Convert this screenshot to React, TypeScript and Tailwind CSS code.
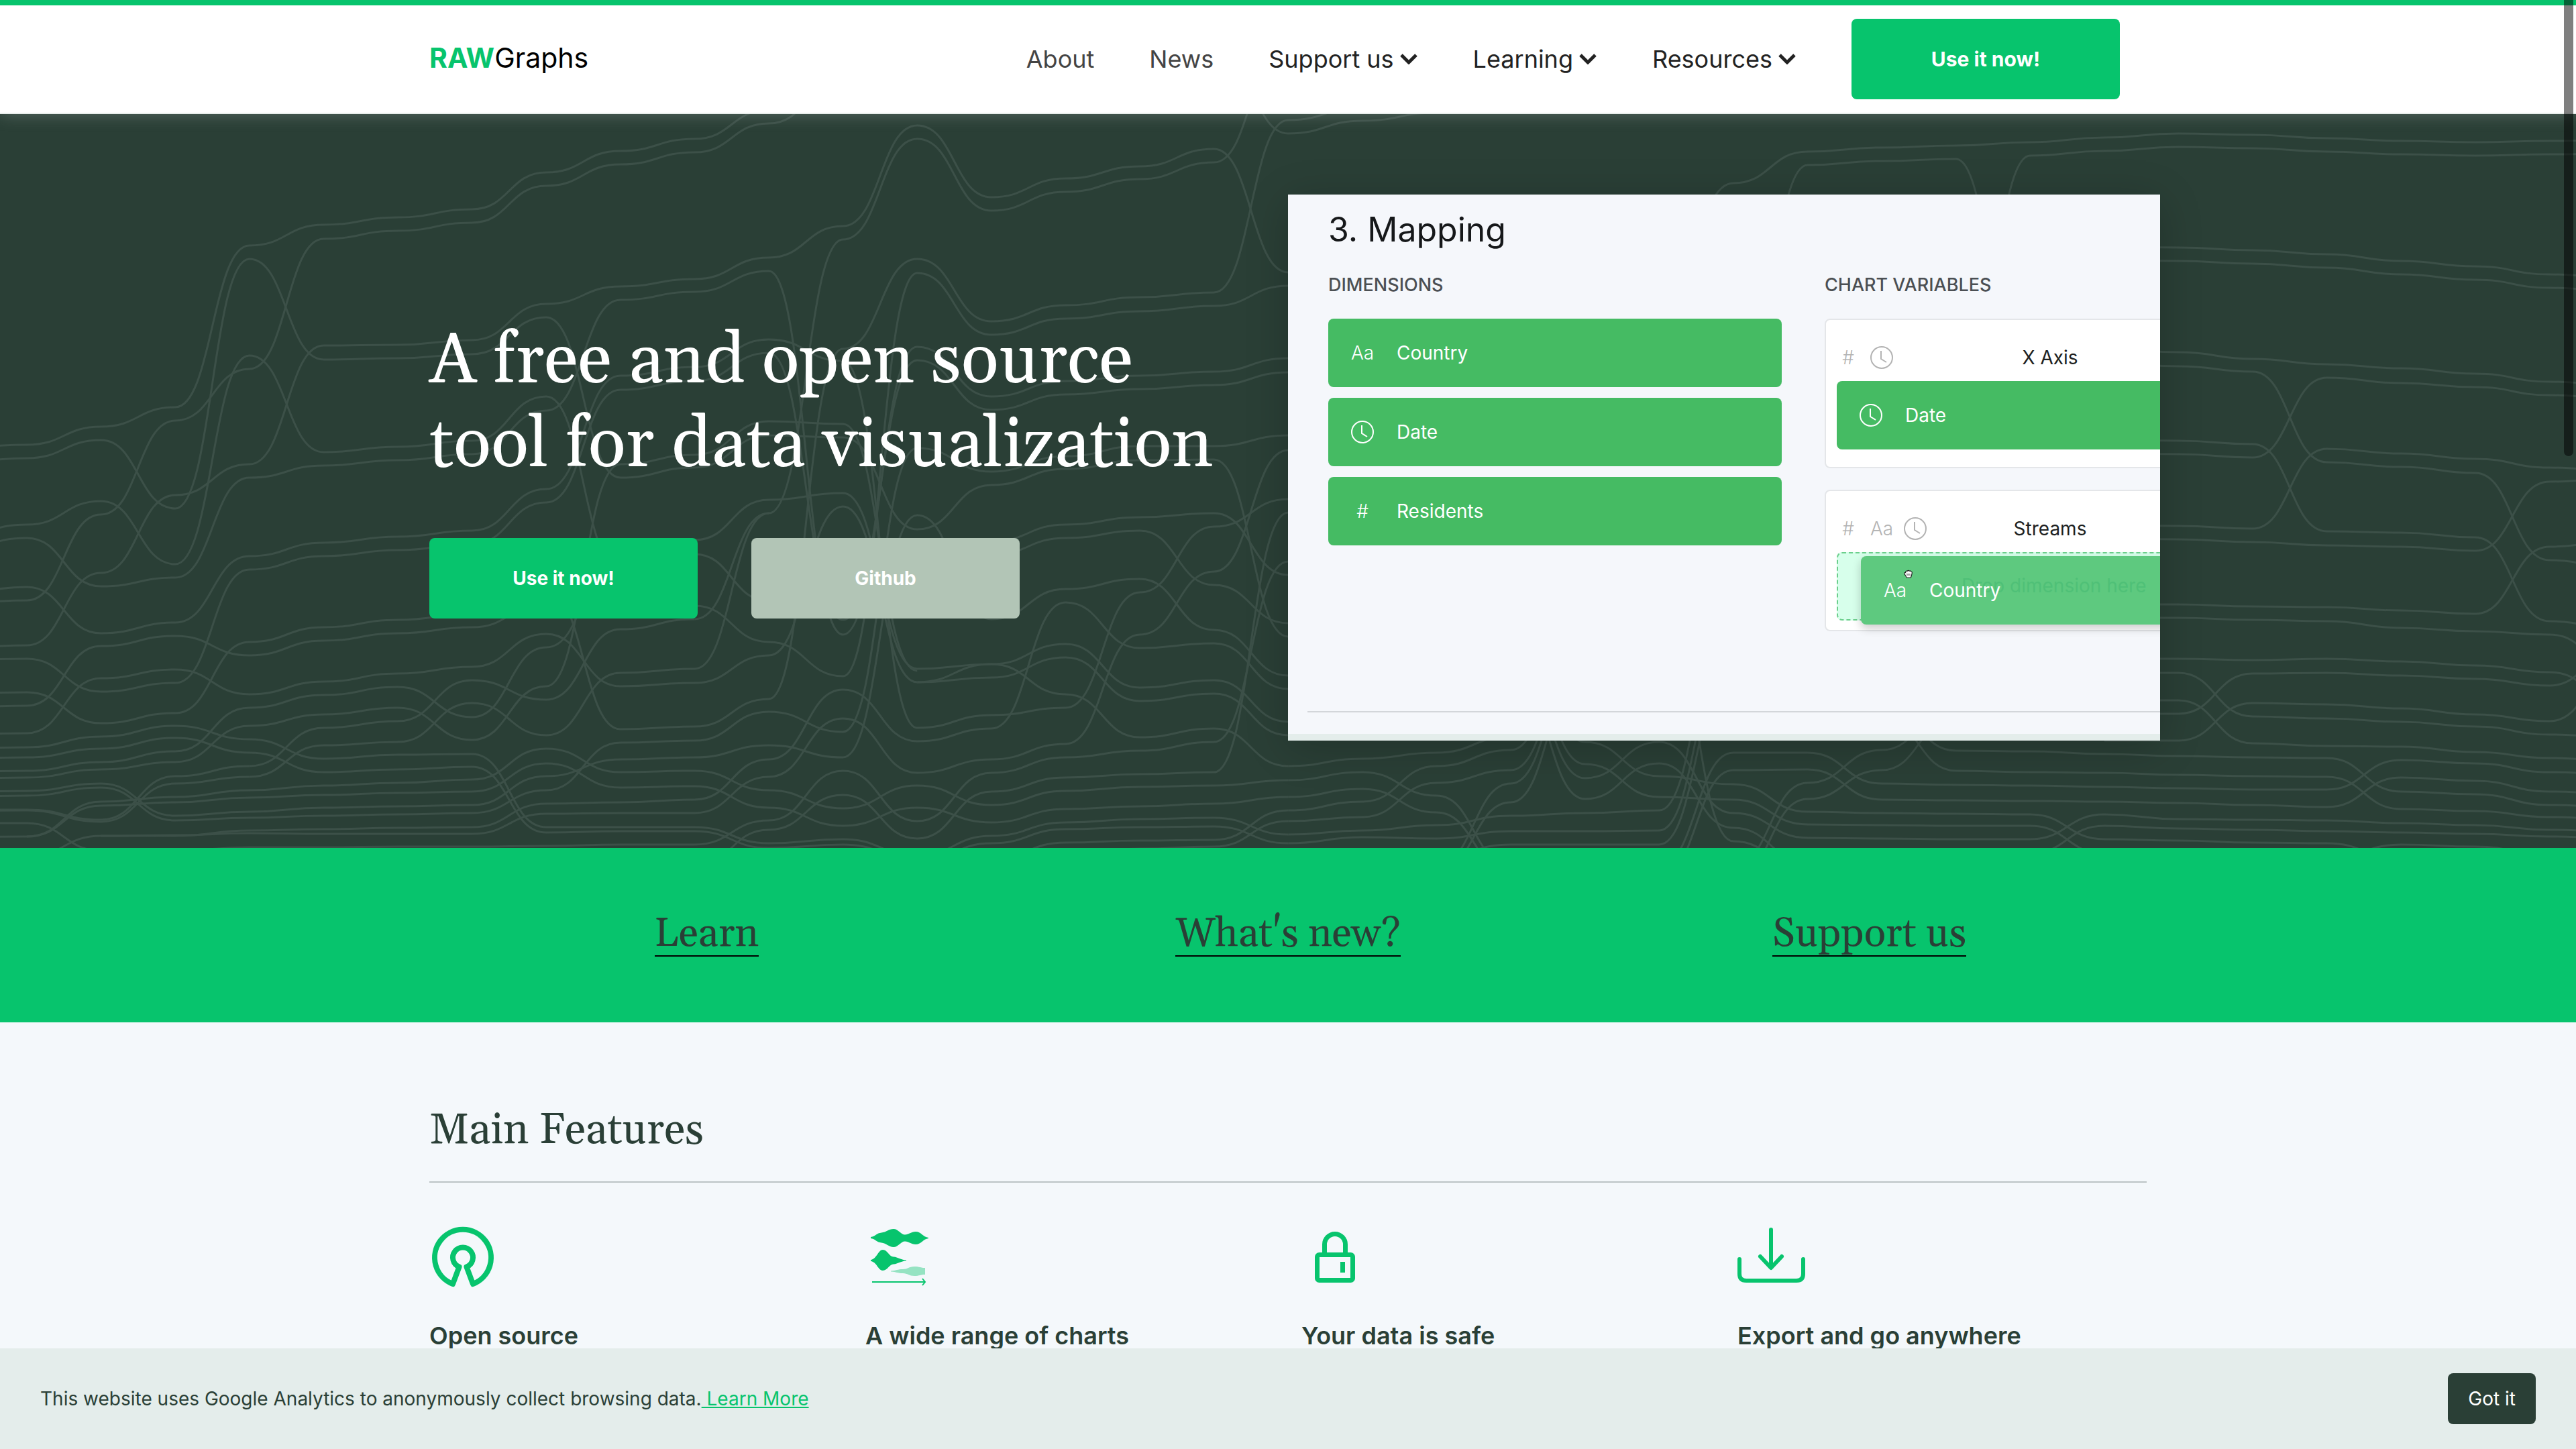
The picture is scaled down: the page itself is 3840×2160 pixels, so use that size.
import React from "react";

const SANS = "font-['Inter','Liberation_Sans',sans-serif]";
const SERIF = "font-['Georgia','Gelasio','Liberation_Serif',serif]";

/* ---------- Bump chart drawn behind the hero ---------- */

const STEP = 110.6;
const ORIGIN = 40;

/* Each stream: index of its first column, then its height at every column. */
const STREAMS: [number, number[]][] = [
  [-1, [668, 663, 636, 607, 366, 335, 324, 312, 257, 225, 207, 164, 130]],
  [-1, [690, 683, 656, 758, 386, 536, 534, 528, 473, 712, 697, 649, 652, 789, 723, 699, 686, 685, 949]],
  [-1, [900, 895, 767, 627, 550, 356, 344, 332, 277, 245, 227, 184, 120]],
  [-1, [800, 782, 747, 841, 530, 674, 666, 657, 591, 848, 826, 896]],
  [-1, [966, 962, 854, 738, 692, 515, 514, 507, 453, 427, 416, 384, 337, 187, 294, 266, 248, 222, 406]],
  [-1, [820, 802, 874, 861, 712, 694, 686, 677, 612, 447, 435, 404, 946, 517, 591, 568, 560, 554, 534]],
  [9, [923, 765, 357, 207, 314, 286, 267, 242, 60]],
  [16, [60, 199, 180, 168, 150]],
  [10, [1042, 520, 386, 479, 455, 443, 436, 179, 160]],
  [-1, [885, 875, 944, 928, 829, 809, 800, 791, 729, 560, 547, 506, 538, 1085, 1066, 1055, 883, 785, 744]],
  [-1, [984, 982, 1031, 1018, 849, 829, 820, 811, 749, 581, 568, 526, 924, 537, 611, 588, 580, 574, 555]],
  [-1, [1034, 1032, 1078, 1063, 957, 935, 924, 915, 878, 1087, 1083, 1042]],
  [-1, [1055, 1052, 963, 948, 977, 955, 944, 935, 900]],
  [-1, [1095, 1093, 1011, 998, 1035, 1016, 1004, 994, 945, 1023, 1018, 977, 755, 1017, 1010, 980, 1045, 1034, 1096]],
  [-1, [1116, 1114, 1098, 1082, 1102, 1131, 1125, 1124, 1233, 1233, 1233, 1257, 1251, 1275]],
  [-1, [1131, 1129, 1116, 1100, 1122, 1151, 1147, 1143, 1241, 1239, 1239, 1264, 1259, 1280]],
  [-1, [1151, 1149, 1136, 1120, 1055, 1036, 1024, 1069, 965, 829, 805, 745, 735, 997, 990, 960, 1025, 1014, 1076]],
  [-1, [1161, 1159, 1147, 1136, 1082, 1065, 1055, 1103, 1023, 692, 678, 628, 632, 1000]],
  [3, [1142, 1085, 1075, 1014, 1043, 938, 923]],
  [3, [1158, 1111, 1106, 1048, 1096, 1003, 997, 765]],
  [-1, [1181, 1179, 1168, 1216, 1210, 1204, 1202, 1200, 1157, 1132, 1129, 1111, 1129, 768, 923, 878, 863, 939, 1007]],
  [-1, [1188, 1186, 1174, 1223, 1219, 1216, 1214, 1212, 1178, 1107, 1104, 1061, 1091, 668, 703, 680, 665, 665, 649]],
  [-1, [1207, 1207, 1222, 1157, 1142]],
  [-1, [1209, 1208, 1225, 1168, 1158]],
  [-1, [1227, 1227, 1268]],
  [-1, [1248, 1247, 1195, 1188, 1178, 1171, 1167, 1162, 1116, 1151, 1149, 1178, 1205, 1171, 1200, 1179, 1173, 1171, 1163]],
  [0, [1247, 1201, 1196, 1189, 1185, 1182, 1180, 1138, 1174, 1172, 1204, 1231, 1204, 1226, 1206, 1202, 1198, 1188]],
  [0, [1277, 1246, 1246, 1238, 1236, 1234, 1233, 1198, 1196, 1192, 1132, 1028, 1105, 1086, 898, 966, 959, 1027]],
  [1, [1246, 1245, 1242, 1243, 1243, 1243, 1213, 1212, 1212, 1158, 1071, 1152, 1132, 1109, 946, 852, 671]],
  [2, [1268, 1263, 1263, 1262, 1262, 1261, 1259, 1259, 1223, 1149, 1224, 1152, 1129, 1119, 1106, 837]],
  [9, [1290, 1237, 1185, 1250, 1180, 1159, 1154, 1151, 764]],
  [9, [903, 957, 1008, 407, 499, 475, 464, 456, 426]],
  [12, [1017, 990, 1035, 1099, 1086, 1142]],
  [12, [1275, 1246, 1226, 1221, 1219, 1244]],
  [12, [1285, 1257, 1236, 1233, 1232, 1257]],
  [13, [1280, 1256, 1253, 1252, 1208]],
  [14, [1275, 1265, 1262, 1224]],
  [13, [807, 782, 771, 765, 857]],
  [13, [827, 802, 791, 872, 929]],
  /* right half */
  [22, [460, 273, 226, 220, 217, 212, 205, 199, 201, 206, 210, 212, 210, 209]],
  [23, [640, 246, 240, 237, 640]],
  [26, [640, 232, 225, 219, 221, 226, 230, 232, 230, 229]],
  [28, [367, 369, 373, 379, 389, 397, 409, 415]],
  [28, [387, 389, 393, 399, 409, 417, 429, 435]],
  [28, [519, 525, 535, 543, 549, 557, 569, 575]],
  [28, [540, 546, 554, 689, 696, 705, 835, 850]],
  [28, [655, 657, 662, 792, 794, 801, 926, 940]],
  [28, [675, 677, 682, 563, 571, 577, 589, 595]],
  [28, [782, 784, 788, 669, 676, 684, 697, 703]],
  [28, [802, 804, 808, 813, 815, 821, 718, 712]],
  [28, [900, 901, 904, 905, 910, 915, 815, 805]],
  [28, [920, 921, 924, 926, 936, 941, 946, 1000]],
  [28, [982, 982, 984, 982, 986, 992, 1002, 1050]],
  [28, [1003, 1003, 1068, 1071, 1076, 1083, 1095, 1100]],
  [28, [1044, 1044, 1108, 1112, 1113, 1121, 1130, 1135]],
  [28, [1064, 1064, 1004, 1003, 1007, 1012, 1022, 960]],
  [28, [1104, 1104, 1048, 1050, 1056, 1065, 1075, 990]],
  [17, [1142, 1131, 1122, 1098, 900]],
  [17, [1163, 1151, 1186, 1290]],
  [17, [1188, 1176, 1211, 1300]],
  [17, [1208, 1195, 1142, 1118, 920]],
  [17, [1224, 1218, 1167, 1148, 960]],
  [17, [1244, 1238, 1230, 1216, 1212, 1208, 900]],
  [17, [1257, 1248, 1250, 1239, 1239, 1238, 960]],
  [19, [1290, 1168, 980]],
  [19, [1300, 1196, 1000]],
  [19, [1277, 1259, 1259, 1259, 1000]],
  [20, [900, 1106, 1157, 1169, 1210, 1212, 1213, 1214, 1251, 1253, 1256, 1257, 1280]],
  [20, [940, 1139, 1188, 1192, 1229, 1230, 1231, 1231, 1272]],
  [20, [980, 1160, 1106, 1212, 1249, 1250, 1251, 1251, 1214, 1221, 1222, 1223, 1227, 1230, 1237, 1240]],
  [20, [1000, 1191, 1138, 1234, 1285]],
  [22, [900, 1254, 1300]],
  [22, [1290, 1122, 1122, 1168, 1170, 1171, 1173, 1175, 1177, 1177, 1133, 1138, 1151, 1155]],
  [22, [1310, 1148, 1147, 1192, 1193, 1194, 1195, 1197, 1200, 1203, 1159, 1164, 1180, 1184]],
  [23, [1290, 1167, 1118, 1050]],
  [23, [1310, 1191, 1148, 1070]],
  [25, [1050, 1119, 1120, 1124, 1127, 1129, 1130, 1180, 1184, 1200, 1204]],
  [25, [1070, 1149, 1151, 1152, 1155, 1157, 1158, 1206, 1209, 1218, 1222]],
  [27, [1272, 1231, 1235, 1237, 1239, 1241, 1243, 1247, 1250]],
  [31, [1280, 1259, 1262, 1275]],
];

function streamPath([start, ys]: [number, number[]]) {
  let x = ORIGIN + start * STEP;
  let d = `M${x.toFixed(1)} ${ys[0]}`;
  for (let i = 1; i < ys.length; i++) {
    const nx = x + STEP;
    const mid = ((x + nx) / 2).toFixed(1);
    d += `C${mid} ${ys[i - 1]} ${mid} ${ys[i]} ${nx.toFixed(1)} ${ys[i]}`;
    x = nx;
  }
  return d;
}

function HeroLines() {
  return (
    <svg
      aria-hidden="true"
      className="absolute inset-0 h-full w-full"
      viewBox="0 170 3840 1094"
      preserveAspectRatio="xMidYMid slice"
      fill="none"
      stroke="#3c5048"
      strokeWidth="3"
    >
      {STREAMS.map((s, i) => (
        <path key={i} d={streamPath(s)} />
      ))}
    </svg>
  );
}

/* ---------- Small icons ---------- */

function Chevron() {
  return (
    <svg aria-hidden="true" className="h-4 w-7" viewBox="0 0 28 16" fill="none" stroke="currentColor" strokeWidth="5">
      <path d="M3 2L14 13L25 2" />
    </svg>
  );
}

function Clock() {
  return (
    <svg aria-hidden="true" className="size-[34px]" viewBox="0 0 34 34" fill="none" stroke="currentColor" strokeWidth="2">
      <circle cx="17" cy="17" r="16" />
      <path d="M16 7v12l8 5" />
    </svg>
  );
}

function GrabCursor() {
  return (
    <svg aria-hidden="true" className="absolute left-[64px] top-5 h-[13px] w-[13px]" viewBox="0 0 13 13">
      <path
        d="M1 6.5C.6 4.500 2 4 2.600 4.500C2.400 2 4.500 1.500 5 2.400C5.500 1 7.500 1 8 2.200C9 1.400 10.500 1.800 10.500 3C12 2.800 12.500 4 12.200 5.500C12 8 11 9 10.500 12H4C3.500 9.500 2 9 1 6.500Z"
        fill="#fff"
        stroke="#222"
        strokeWidth="1.200"
      />
      <path d="M5 6v3M7 6v3M9 6v3" stroke="#222" strokeWidth="0.800" />
    </svg>
  );
}

type Kind = "text" | "date" | "number";

function TypeIcon({ kind }: { kind: Kind }) {
  return (
    <span className="flex w-[34px] justify-center font-light">
      {kind === "date" ? <Clock /> : kind === "text" ? "Aa" : "#"}
    </span>
  );
}

function OpenSourceIcon() {
  return (
    <svg aria-hidden="true" className="size-[100px]" viewBox="0 -4 100 100" fill="none" stroke="#07c46d" strokeWidth="8" strokeLinejoin="round">
      <path d="M35 87A42 42 0 1 1 65 87L55.500 61.500A15 15 0 1 0 44.500 61.500Z" />
    </svg>
  );
}

function ChartsIcon() {
  return (
    <svg aria-hidden="true" className="size-[100px]" viewBox="1290 1822 100 100" fill="#07c46d">
      <path d="M1298 1843C1305 1842 1307 1837 1314 1836.500C1321 1836 1325 1831 1332 1831C1339 1831 1343 1839.500 1349 1839.500C1355 1839.500 1358 1835 1365 1835C1373 1835 1376 1843 1384 1844V1845C1376 1846 1373 1854 1365 1854C1358 1854 1355 1849.500 1349 1849.500C1343 1849.500 1339 1858 1332 1858C1325 1858 1321 1852 1314 1851.500C1307 1851 1305 1846 1298 1845Z" />
      <path d="M1298 1877C1307 1876 1309 1862 1316 1862C1323 1862 1325 1872 1332 1872.500C1339 1873 1342 1877 1351 1877.500V1878.500C1342 1879 1339 1883 1332 1883.500C1325 1884 1323 1893 1316 1893C1309 1893 1307 1880 1298 1879Z" />
      <path d="M1328 1893.500C1336 1893 1338 1891 1346 1891C1353 1891 1355 1887 1363 1887C1371 1887 1372 1889 1379 1889V1899C1372 1899 1371 1901 1363 1901C1355 1901 1353 1897 1346 1897C1338 1897 1336 1895 1328 1894.500Z" opacity="0.4" />
      <path d="M1300 1910H1379M1375 1905L1379 1910L1375 1915" fill="none" stroke="#07c46d" strokeWidth="2" />
    </svg>
  );
}

function LockIcon() {
  return (
    <svg aria-hidden="true" className="size-[100px]" viewBox="1940 1822 100 100" fill="none" stroke="#07c46d" strokeWidth="7">
      <rect x="1963.500" y="1869.500" width="53" height="38" rx="3" />
      <path d="M1974.500 1869V1854A15.500 15.500 0 0 1 2005.500 1854V1869" />
      <path d="M2001.500 1880V1896" />
    </svg>
  );
}

function DownloadIcon() {
  return (
    <svg aria-hidden="true" className="h-[100px] w-[104px]" viewBox="2590 1822 104 100" fill="none" stroke="#07c46d" strokeWidth="6" strokeLinecap="round" strokeLinejoin="round">
      <path d="M2640 1832V1888M2624 1872L2640 1889L2656 1872" />
      <path d="M2593 1876V1898Q2593 1908 2603 1908H2678Q2688 1908 2688 1898V1876" />
    </svg>
  );
}

/* ---------- Mapping preview ---------- */

const chip = "flex h-[102px] items-center gap-[34px] rounded-lg pl-[34px] text-[28px] leading-9 text-white";

function Chip({ kind, label }: { kind: Kind; label: string }) {
  return (
    <div className={`${chip} bg-[#45bb63]`}>
      <TypeIcon kind={kind} />
      <span>{label}</span>
    </div>
  );
}

function VariableHeader({ kinds, label }: { kinds: Kind[]; label: string }) {
  return (
    <div className="grid h-[91px] grid-cols-[1fr_auto_1fr] items-center pt-5 text-[28px] leading-9">
      <div className="flex items-center gap-4 text-[#b3b3b3]">
        {kinds.map((k) => (
          <TypeIcon key={k} kind={k} />
        ))}
      </div>
      <span className="text-[#1d1f21]">{label}</span>
    </div>
  );
}

function MappingPreview() {
  return (
    <div className="relative overflow-hidden border-b-10 border-[#e4edeb] bg-[#f5f7fb] pt-5 shadow-[0_10px_60px_rgba(0,0,0,0.2)]">
      <div className="pl-[60px]">
        <h3 className="text-[50px] leading-16 text-[#16181a]">3. Mapping</h3>
        <div className="mt-[33px] grid grid-cols-[676px_672px] gap-16">
          <div>
            <h4 className="text-[27px] font-medium leading-9 text-[#4b4f53]">DIMENSIONS</h4>
            <div className="mt-8 flex flex-col gap-4">
              <Chip kind="text" label="Country" />
              <Chip kind="date" label="Date" />
              <Chip kind="number" label="Residents" />
            </div>
          </div>
          <div>
            <h4 className="text-[27px] font-medium leading-9 text-[#4b4f53]">CHART VARIABLES</h4>
            <div className="mt-8 rounded-lg border-2 border-[#e4e6e9] bg-white px-4 pb-[26px]">
              <VariableHeader kinds={["number", "date"]} label="X Axis" />
              <Chip kind="date" label="Date" />
            </div>
            <div className="mt-8 rounded-lg border-2 border-[#e4e6e9] bg-white px-4 pb-[14px]">
              <VariableHeader kinds={["number", "text", "date"]} label="Streams" />
              <div className="relative h-[102px] rounded-lg border-2 border-dashed border-[#6bcf8c] bg-[#d7ffeb]">
                <div className={`${chip} absolute left-[34px] top-1 w-full bg-[#5ec97f] shadow-[0_6px_14px_rgba(0,0,0,0.2)]`}>
                  <span className="absolute left-[150px] top-[26px] text-[#4fc077]">Drop dimension here</span>
                  <TypeIcon kind="text" />
                  <span className="relative">Country</span>
                  <GrabCursor />
                </div>
              </div>
            </div>
          </div>
        </div>
      </div>
      <div className="mb-8 ml-[29px] mt-[119px] h-[2px] bg-[#d3d6da]" />
    </div>
  );
}

/* ---------- Page ---------- */

const MENUS = ["Support us", "Learning", "Resources"];
const TOPICS = ["Learn", "What's new?", "Support us"];
const FEATURES = [
  { title: "Open source", icon: <OpenSourceIcon /> },
  { title: "A wide range of charts", icon: <ChartsIcon /> },
  { title: "Your data is safe", icon: <LockIcon /> },
  { title: "Export and go anywhere", icon: <DownloadIcon /> },
];

const bigButton = "flex h-[120px] w-[400px] items-center justify-center rounded-lg font-bold text-white";

export default function App() {
  return (
    <div className={`relative min-h-screen overflow-hidden bg-[#f4f8fb] ${SANS}`}>
      <header className="relative z-10 border-b-2 border-t-8 border-b-[#e9eeec] border-t-[#07c46d] bg-white shadow-[0_0_24px_rgba(228,237,235,0.25)]">
        <div className="mx-auto flex h-40 w-full max-w-[2600px] items-center justify-between pl-5 pr-[60px]">
          <a href="#home" className="pb-1 text-[41px] leading-[50px] text-black">
            <b className="font-bold text-[#07c46d]">RAW</b>Graphs
          </a>
          <nav className="flex items-center gap-[82px] text-[36px] leading-[44px] text-[#222]">
            <a href="#about" className="text-[#444]">About</a>
            <a href="#news" className="text-[#444]">News</a>
            {MENUS.map((m) => (
              <button key={m} type="button" className="flex items-center gap-2">
                {m}
                <Chevron />
              </button>
            ))}
            <a href="#app" className={`${bigButton} bg-[#07c46d] text-[30px]`}>Use it now!</a>
          </nav>
        </div>
      </header>

      <section className="relative bg-[#2a3f36]">
        <HeroLines />
        <div className="relative mx-auto grid w-full max-w-[2600px] grid-cols-2 items-center pb-40 pt-30">
          <div className="pl-5 pt-[6px]">
            <h1 className={`text-[104px] leading-[125px] text-white ${SERIF}`}>
              A free and open source
              <br />
              tool for data visualization
            </h1>
            <div className="mt-[74px] flex gap-20 text-[28px]">
              <a href="#app" className={`${bigButton} bg-[#07c46d]`}>Use it now!</a>
              <a href="#github" className={`${bigButton} bg-[#b2c5b6]`}>Github</a>
            </div>
          </div>
          <MappingPreview />
        </div>
      </section>

      <section className="bg-[#07c46d]">
        <div className={`mx-auto grid h-[260px] w-full max-w-[2600px] grid-cols-3 items-center justify-items-center text-[60px] leading-[62px] text-[#2a3f36] ${SERIF}`}>
          {TOPICS.map((t) => (
            <a key={t} href="#topic" className="border-b-2 border-black">{t}</a>
          ))}
        </div>
      </section>

      <main className="mx-auto w-full max-w-[2600px] px-5 pt-[124px] text-[#2a3f36]">
        <h2 className={`border-b-2 border-[#bcc4c5] pb-[37px] text-[64px] leading-[76px] ${SERIF}`}>Main Features</h2>
        <div className="mt-[60px] grid grid-cols-4 gap-10">
          {FEATURES.map((f) => (
            <article key={f.title}>
              {f.icon}
              <h3 className="mt-[46px] whitespace-nowrap text-[36px] font-semibold leading-[44px]">{f.title}</h3>
            </article>
          ))}
        </div>
      </main>

      <div className="fixed inset-x-0 bottom-0 z-20 flex h-[150px] items-center justify-between bg-[#e4edeb] px-[60px] text-[28px] leading-9 text-[#2a3f36]">
        <p>
          This website uses Google Analytics to anonymously collect browsing data.
          <a href="#privacy" className="whitespace-pre text-[#07c46d] underline"> Learn More</a>
        </p>
        <button type="button" className="rounded-lg bg-[#2a3f36] px-[30px] py-5 text-white">Got it</button>
      </div>

      <div className="fixed right-1 top-0 z-30 h-[680px] w-[14px] rounded-b-full bg-black/50" />
    </div>
  );
}
